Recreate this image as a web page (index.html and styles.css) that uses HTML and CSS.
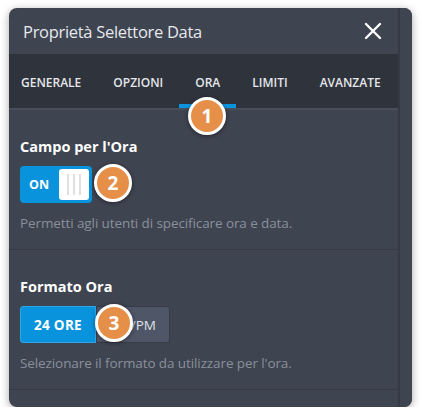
FILE: index.html
```html
<!DOCTYPE html>
<html lang="it">
<head>
    <meta charset="UTF-8">
    <title>Proprietà Selettore Data</title>
    <link rel="stylesheet" href="styles.css">
</head>
<body>
<div class="panel">
    <div class="main">
        <div class="header">
            <span class="title">Proprietà Selettore Data</span>
            <svg class="close" width="18" height="18" viewBox="0 0 18 18">
                <path d="M2 2 L16 16 M16 2 L2 16" stroke="#fff" stroke-width="2.4" stroke-linecap="round"/>
            </svg>
        </div>
        <ul class="tabs">
            <li class="tab">Generale</li>
            <li class="tab">Opzioni</li>
            <li class="tab active">Ora</li>
            <li class="tab">Limiti</li>
            <li class="tab">Avanzate</li>
        </ul>
        <div class="section">
            <div class="label">Campo per l'Ora</div>
            <div class="toggle">
                <span class="toggle-text">ON</span>
                <span class="knob"><i></i><i></i><i></i></span>
            </div>
            <div class="hint">Permetti agli utenti di specificare ora e data.</div>
        </div>
        <div class="section">
            <div class="label">Formato Ora</div>
            <div class="segmented">
                <span class="seg seg-on">24 ORE</span>
                <span class="seg">AM/PM</span>
            </div>
            <div class="hint">Selezionare il formato da utilizzare per l'ora.</div>
        </div>
    </div>
    <div class="scroll"></div>

    <!-- step markers -->
    <span class="step step-1">1</span>
    <span class="step step-2">2</span>
    <span class="step step-3">3</span>
</div>
</body>
</html>
```

FILE: styles.css
```css
* {
    margin: 0;
    padding: 0;
    box-sizing: border-box;
}

ul {
    list-style: none;
}

body {
    background: #fff;
    font-family: "Open Sans", "Noto Sans", sans-serif;
}

.panel {
    position: relative;
    display: flex;
    width: 403px;
    height: 399px;
    margin: 8px 0 0 9px;
    background: #3e4450;
    border-radius: 8px;
    overflow: hidden;
    box-shadow: 0 2px 8px rgba(0, 0, 0, 0.35);
}

.main {
    flex: 1;
    display: flex;
    flex-direction: column;
}

.scroll {
    width: 14px;
    border-left: 2px solid #343944;
    background: #3e4450;
}

.header {
    height: 46px;
    padding: 0 16px 0 14px;
    display: flex;
    align-items: center;
    justify-content: space-between;
}

.title {
    font-size: 16.5px;
    color: #e6e8ec;
    letter-spacing: -0.3px;
}

.tabs {
    display: flex;
    height: 56px;
    background: #2f333b;
    border-bottom: 2px solid #484e5a;
}

.tab {
    display: flex;
    align-items: center;
    padding: 6px 16px 0;
    border-bottom: 4px solid transparent;
    font-size: 12px;
    font-weight: 600;
    color: #e4e6ea;
    text-transform: uppercase;
}

.tab:first-child {
    padding-left: 12px;
}

.tab.active {
    border-bottom-color: #0a95e0;
}

.section {
    padding: 28px 11px 17px;
    border-bottom: 1px solid #353a44;
}

.label {
    height: 18px;
    line-height: 18px;
    font-size: 14.5px;
    font-weight: 700;
    color: #fff;
}

.toggle {
    display: flex;
    align-items: center;
    width: 72px;
    height: 37px;
    margin-top: 10px;
    padding: 3px;
    background: #0a93dd;
    border-radius: 4px;
}

.toggle-text {
    padding-left: 6px;
    font-size: 12.5px;
    font-weight: 700;
    color: #fff;
}

.knob {
    display: flex;
    justify-content: center;
    align-items: center;
    gap: 4px;
    width: 30px;
    height: 31px;
    margin-left: auto;
    background: #fff;
    border-radius: 3px;
}

.knob i {
    width: 2px;
    height: 21px;
    background: #e0e0e0;
}

.segmented {
    display: flex;
    height: 37px;
    margin-top: 10px;
}

.seg {
    display: flex;
    align-items: center;
    justify-content: center;
    width: 74px;
    font-size: 13.5px;
    color: #dfe2e6;
    background: #4f5668;
    border: 1px solid #363b45;
    border-radius: 0 3px 3px 0;
}

.seg-on {
    width: 76px;
    font-weight: 700;
    color: #fff;
    background: #0a93dd;
    border-color: #2fa6ea;
    border-radius: 3px 0 0 3px;
    letter-spacing: 0.3px;
}

.hint {
    height: 18px;
    line-height: 18px;
    margin-top: 11px;
    font-size: 13.5px;
    color: #8a909b;
    letter-spacing: -0.1px;
}

.step {
    position: absolute;
    width: 38px;
    height: 38px;
    display: flex;
    align-items: center;
    justify-content: center;
    background: #e58f48;
    border: 3px solid #fff;
    border-radius: 50%;
    font-size: 19px;
    font-weight: 700;
    color: #fff;
    box-shadow: 0 1px 4px rgba(0, 0, 0, 0.45);
}

.step-1 {
    left: 179px;
    top: 89px;
}

.step-2 {
    left: 85px;
    top: 156px;
}

.step-3 {
    left: 86px;
    top: 296px;
}
```
